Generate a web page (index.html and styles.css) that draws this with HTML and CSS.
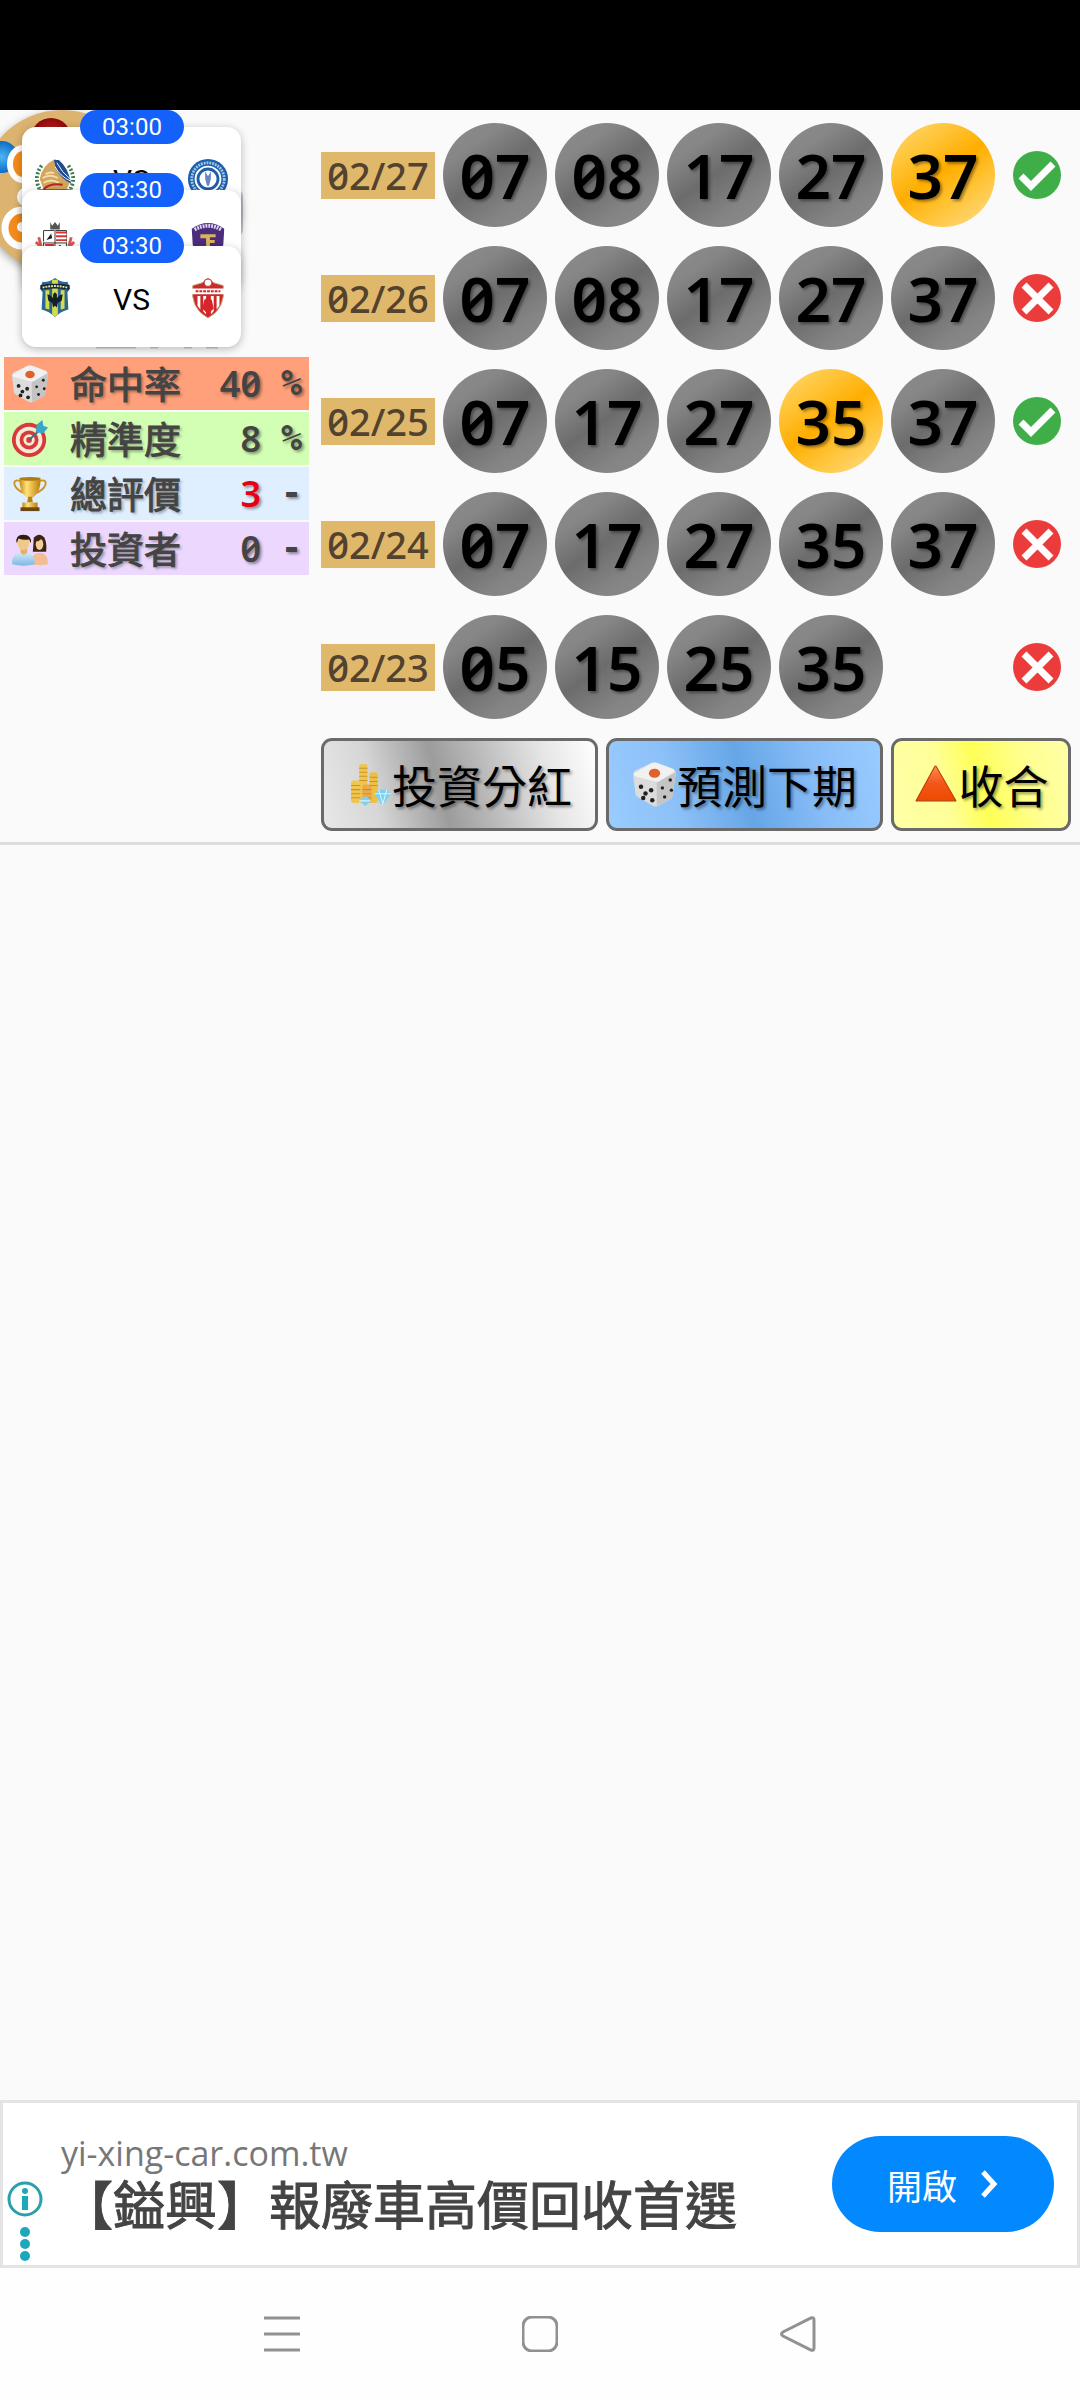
FILE: index.html
```html
<!DOCTYPE html>
<html lang="zh-Hant">

<head>
    <meta charset="UTF-8">
    <meta name="viewport" content="width=device-width, initial-scale=1.0">
    <title>預測下期</title>
    <link rel="stylesheet" href="styles.css">
</head>

<body>
    <!-- shared icons -->
    <svg class="sprite" aria-hidden="true">
        <defs>
            <linearGradient id="gold" x1="0" x2="1">
                <stop offset="0" stop-color="#c98a12" />
                <stop offset="0.35" stop-color="#ffe27a" />
                <stop offset="1" stop-color="#c07c08" />
            </linearGradient>
            <linearGradient id="orange" x1="0" y1="0" x2="0" y2="1">
                <stop offset="0" stop-color="#ff8a50" />
                <stop offset="0.5" stop-color="#f4561a" />
                <stop offset="1" stop-color="#ee4a00" />
            </linearGradient>
            <linearGradient id="shirt" x1="0" y1="0" x2="0" y2="1">
                <stop offset="0" stop-color="#d5ecfb" />
                <stop offset="1" stop-color="#7fb8e2" />
            </linearGradient>
            <radialGradient id="red-ball">
                <stop offset="0" stop-color="#e03030" />
                <stop offset="1" stop-color="#8c0808" />
            </radialGradient>
            <radialGradient id="blue-ball">
                <stop offset="0" stop-color="#4fb4f5" />
                <stop offset="1" stop-color="#0b6cc4" />
            </radialGradient>
        </defs>
        <symbol id="ok" viewBox="0 0 48 48">
            <circle cx="24" cy="24" r="24" fill="#3fae49" />
            <path d="M8 25l10 10 22-22" fill="none" stroke="#fff" stroke-width="7" />
        </symbol>
        <symbol id="no" viewBox="0 0 48 48">
            <circle cx="24" cy="24" r="24" fill="#ec3b3b" />
            <path d="M11 11l27 27M38 11L11 38" fill="none" stroke="#fff" stroke-width="7" />
        </symbol>
        <symbol id="dice" viewBox="0 0 40 40">
            <path d="M1 11q0-3 3-4L17 1q3-1 6 0l13 5q3 1 3 4l-3 20q0 2-2 3l-11 6q-2 1-4 0L5 31q-2-1-2-3z" fill="#dcdcdc" />
            <path d="M22 18L39 9l-3 21q0 2-2 3l-12 6z" fill="#c4c4c4" />
            <path d="M2 10L17 1q3-1 6 0l13 5q3 1 1 3l-13 8q-2 1-4 0L4 13q-3-1-2-3z" fill="#f1f1f1" />
            <ellipse cx="20" cy="10" rx="5" ry="4" fill="#e2602c" />
            <g fill="#222">
                <circle cx="8" cy="22" r="2" />
                <circle cx="17" cy="25" r="2" />
                <circle cx="12" cy="28" r="2" />
                <circle cx="10" cy="32" r="2" />
                <circle cx="18" cy="34" r="2" />
                <circle cx="34" cy="16" r="1.500" />
                <circle cx="27" cy="23" r="1.500" />
                <circle cx="35" cy="25" r="1.500" />
                <circle cx="29" cy="31" r="1.500" />
            </g>
        </symbol>
        <symbol id="target" viewBox="0 0 40 40">
            <circle cx="19" cy="21" r="18" fill="#d83a3a" />
            <circle cx="19" cy="21" r="14" fill="#f6ebd6" />
            <circle cx="19" cy="21" r="10" fill="#d83a3a" />
            <circle cx="19" cy="21" r="6" fill="#f6ebd6" />
            <circle cx="19" cy="21" r="3" fill="#d83a3a" />
            <path d="M19 21L32 9" stroke="#35708c" stroke-width="2" />
            <path d="M26 13l1-8 6-5 1 6 5 2-5 6z" fill="#38a6c8" />
        </symbol>
        <symbol id="cup" viewBox="0 0 40 40">
            <path d="M11 7C3 3 1 9 7 15q3 3 8 4M29 7c8-4 10 2 4 8q-3 3-8 4" fill="none" stroke="#c99522" stroke-width="2" />
            <path d="M9 3h22q1 15-8 21h-6Q8 18 9 3z" fill="url(#gold)" />
            <ellipse cx="20" cy="4" rx="11" ry="2" fill="#b07a10" />
            <path d="M18 23h4l1 6h-6z" fill="#b9820f" />
            <path d="M12 29h16v6H12z" fill="url(#gold)" />
            <path d="M10 34h20v4H10z" fill="#6b4a12" />
        </symbol>
        <symbol id="people" viewBox="0 0 40 40">
            <path d="M24 8q6-6 11 0 3 6 2 15H23z" fill="#3c2412" />
            <path d="M21 36q0-12 9-12t9 12q-8 2-18 0z" fill="#f2bd94" />
            <ellipse cx="30" cy="15" rx="4" ry="6" fill="#f3cc9c" />
            <path d="M26 12q5 0 7-5l2 7V8l-6-3-4 4z" fill="#3c2412" />
            <path d="M1 36q0-13 12-13t12 13q-12 3-24 0z" fill="url(#shirt)" />
            <path d="M10 19h7v5q-4 4-7 0z" fill="#e2b070" />
            <ellipse cx="13" cy="14" rx="6" ry="7" fill="#f1c888" />
            <path d="M6 14Q4 5 13 5t8 9l-2-4q-6 1-11-1z" fill="#2f1c0e" />
        </symbol>
        <symbol id="coins" viewBox="0 0 44 44">
            <rect x="12" y="2" width="8" height="38" rx="2" fill="#f0c450" />
            <rect x="22" y="10" width="8" height="30" rx="2" fill="#eebf45" />
            <rect x="4" y="18" width="9" height="22" rx="2" fill="#f1c650" />
            <rect x="15" y="22" width="9" height="18" rx="2" fill="#ecaa4c" />
            <path d="M12 6h8M12 10h8M12 14h8M12 18h8M22 15h8M22 19h8M22 23h8M4 23h9M4 27h9M4 31h9M4 35h9M15 27h9M15 31h9M15 35h9" stroke="#c8922a" />
            <path d="M27 31l4-4h8l4 4-7 10h-3zM12 38l3-4h5l3 4-5 5z" fill="#7fd0ee" />
            <path d="M27 31h16M31 27l4 14 4-14M12 38h11" fill="none" stroke="#d9f5ff" />
        </symbol>
        <symbol id="up" viewBox="0 0 44 44">
            <path d="M3 38L21 5q1-2 2 0l19 33z" fill="url(#orange)" stroke="#b83c08" stroke-linejoin="round" />
        </symbol>
    </svg>

    <header class="status-bar"></header>

    <main class="board">
        <section class="side">
            <div class="profile">
                <svg class="profile-art" viewBox="0 0 309 245" aria-hidden="true">
                    <circle cx="62" cy="82" r="82" fill="#dcb470" />
                    <circle cx="51" cy="28" r="20" fill="url(#red-ball)" />
                    <circle cx="2" cy="47" r="16" fill="url(#blue-ball)" />
                    <ellipse cx="23" cy="54" rx="13" ry="16" fill="#f58c1a" stroke="#fff" stroke-width="6" />
                    <circle cx="27" cy="87" r="10" fill="#fff" />
                    <ellipse cx="22" cy="118" rx="17" ry="18" fill="#f58c1a" stroke="#fff" stroke-width="7" />
                    <circle cx="22" cy="117" r="5" fill="#fff" />
                    <rect x="224" y="80" width="19" height="46" rx="6" fill="#c9c7d2" />
                    <path d="M96 237h40M150 237h8M184 237h8M206 237h12" stroke="#ccc" stroke-width="3" />
                </svg>
            </div>
            <table class="stats">
                <tr class="hit">
                    <td class="icon"><svg><use href="#dice" /></svg></td>
                    <th scope="row">命中率</th>
                    <td class="num">40</td>
                    <td class="unit">%</td>
                </tr>
                <tr class="accuracy">
                    <td class="icon"><svg><use href="#target" /></svg></td>
                    <th scope="row">精準度</th>
                    <td class="num">8</td>
                    <td class="unit">%</td>
                </tr>
                <tr class="rating">
                    <td class="icon"><svg><use href="#cup" /></svg></td>
                    <th scope="row">總評價</th>
                    <td class="num">3</td>
                    <td class="unit">-</td>
                </tr>
                <tr class="investor">
                    <td class="icon"><svg><use href="#people" /></svg></td>
                    <th scope="row">投資者</th>
                    <td class="num">0</td>
                    <td class="unit">-</td>
                </tr>
            </table>
        </section>

        <section class="history">
            <div class="draw">
                <time>02/27</time>
                <span class="ball">07</span>
                <span class="ball">08</span>
                <span class="ball">17</span>
                <span class="ball">27</span>
                <span class="ball win">37</span>
                <svg class="mark"><use href="#ok" /></svg>
            </div>
            <div class="draw">
                <time>02/26</time>
                <span class="ball">07</span>
                <span class="ball">08</span>
                <span class="ball">17</span>
                <span class="ball">27</span>
                <span class="ball">37</span>
                <svg class="mark"><use href="#no" /></svg>
            </div>
            <div class="draw">
                <time>02/25</time>
                <span class="ball">07</span>
                <span class="ball">17</span>
                <span class="ball">27</span>
                <span class="ball win">35</span>
                <span class="ball">37</span>
                <svg class="mark"><use href="#ok" /></svg>
            </div>
            <div class="draw">
                <time>02/24</time>
                <span class="ball">07</span>
                <span class="ball">17</span>
                <span class="ball">27</span>
                <span class="ball">35</span>
                <span class="ball">37</span>
                <svg class="mark"><use href="#no" /></svg>
            </div>
            <div class="draw">
                <time>02/23</time>
                <span class="ball">05</span>
                <span class="ball">15</span>
                <span class="ball">25</span>
                <span class="ball">35</span>
                <svg class="mark"><use href="#no" /></svg>
            </div>
            <div class="actions">
                <button class="silver"><svg><use href="#coins" /></svg>投資分紅</button>
                <button class="blue"><svg><use href="#dice" /></svg>預測下期</button>
                <button class="yellow"><svg><use href="#up" /></svg>收合</button>
            </div>
        </section>

        <!-- floating match widget -->
        <aside class="matches">
            <div class="match">
                <time>03:00</time>
                <svg class="crest" viewBox="0 0 44 44">
                    <path d="M8 8Q-2 22 8 36M36 8q10 14 0 28" fill="none" stroke="#3d7a4d" stroke-width="4" stroke-dasharray="2 2" />
                    <path d="M6 22Q8 8 22 1q14 10 15 26l-6 13H13z" fill="#d4a55c" />
                    <path d="M21 2l5 0q10 8 13 25-10-5-16-15z" fill="#1f4d8c" />
                    <path d="M24 5q5 10 14 17M22 9q5 10 16 15" stroke="#fff" fill="none" />
                    <path d="M9 21q8-5 16 0M10 26q8-5 16 0M12 17q5-3 9-1" stroke="#f3dcb0" fill="none" stroke-width="2" />
                    <path d="M10 33q6-7 20-5" stroke="#b3261e" fill="none" stroke-width="2" />
                    <path d="M5 33h34v5H5z" fill="#222" />
                </svg>
                <b>VS</b>
                <svg class="crest" viewBox="0 0 44 44">
                    <circle cx="22" cy="22" r="21" fill="#1d5ea8" />
                    <circle cx="22" cy="22" r="17" fill="none" stroke="#9fc4ea" stroke-width="3" stroke-dasharray="2 1" />
                    <circle cx="22" cy="22" r="13" fill="#1d5ea8" stroke="#fff" stroke-width="2" />
                    <circle cx="22" cy="22" r="9" fill="#fff" />
                    <path d="M19 14l3 5 3-5v8l-2 7h-2l-2-7z" fill="#6a86c8" />
                </svg>
            </div>
            <div class="match">
                <time>03:30</time>
                <svg class="crest" viewBox="0 0 44 44">
                    <path d="M17 1l2 4 3-4 3 4 2-4v8H17z" fill="#555" />
                    <path d="M5 17q2 10 6 18M2 22l8 8M39 17q-2 10-6 18M42 22l-8 8" stroke="#d55" fill="none" stroke-width="3" />
                    <path d="M10 10h24v18q-4 10-12 12-8-2-12-12z" fill="#fff" stroke="#333" />
                    <path d="M23 11h11v11H23z" fill="#d33" />
                    <path d="M23 14h11M23 18h11M22 10v28M10 22h24" stroke="#fff" stroke-width="2" />
                    <path d="M22 10v28M10 23h24" stroke="#333" />
                    <path d="M13 20l5-7 1 5zM24 28l3-3 5 4z" fill="#222" />
                    <path d="M11 24h10v10q-7-1-10-10z" fill="#d33" />
                </svg>
                <b>VS</b>
                <svg class="crest" viewBox="0 0 44 44">
                    <path d="M5 8q17-12 34 0l-1 17q-3 11-16 18Q9 36 6 25z" fill="#4b2c7d" />
                    <path d="M8 9q14-8 28 0" fill="none" stroke="#ddd4ee" stroke-width="4" stroke-dasharray="2 1" />
                    <path d="M14 14h16v3h-6v3h5v3h-5v4h5v3H20V18h-6z" fill="#d9b45a" />
                </svg>
            </div>
            <div class="match">
                <time>03:30</time>
                <svg class="crest" viewBox="0 0 44 44">
                    <path d="M9 5q6 1 13-4 7 5 13 4l3 7-3 4 1 18q-8 2-14 8-6-6-14-8l1-18-3-4z" fill="#2a6793" />
                    <path d="M12 14h4v20l-4-1zM28 14h4v19l-4 1zM19 3h6v36l-3 3-3-3z" fill="#d2dc4c" />
                    <path d="M7 11q15-3 30 0" stroke="#16252f" stroke-width="5" fill="none" />
                    <path d="M9 11q13-3 26 0" stroke="#e5e9b0" stroke-width="2" stroke-dasharray="2 1" fill="none" />
                    <path d="M14 18l3 1 3 3v-4l2-2 2 2v4l3-3 3-1-1 7-4 2-1 5-2-2-2 2-1-5-4-2z" fill="#15202a" />
                </svg>
                <b>VS</b>
                <svg class="crest" viewBox="0 0 44 44">
                    <path d="M6 9l10-3 6-5 6 5 10 3q3 24-16 34Q3 33 6 9z" fill="#c92b2b" stroke="#cfae74" />
                    <path d="M11 20h3v14l-3-4zM17 20h3v19l-3-3zM25 20h3v16l-3 3zM31 20h3v10l-3 4z" fill="#fff" />
                    <path d="M18 24q4-4 8 0l2 9-6 6-6-6z" fill="#d9242b" />
                    <path d="M5 12h34v6H5z" fill="#fff" />
                    <path d="M9 15h26" stroke="#c92b2b" stroke-width="2" stroke-dasharray="3 1" />
                    <circle cx="22" cy="6" r="4" fill="#fff" stroke="#c92b2b" />
                </svg>
            </div>
        </aside>
    </main>

    <footer class="ad">
        <div class="ad-info">
            <svg viewBox="0 0 36 84" fill="#1ba8ba">
                <circle cx="18" cy="18" r="16" fill="none" stroke="#2b9fab" stroke-width="3" />
                <circle cx="18" cy="10" r="3" />
                <path d="M15 15h6v14h-6z" />
                <circle cx="18" cy="51" r="5" />
                <circle cx="18" cy="63" r="5" />
                <circle cx="18" cy="75" r="5" />
            </svg>
        </div>
        <div class="ad-text">
            <p class="domain">yi-xing-car.com.tw</p>
            <p class="headline">【鎰興】報廢車高價回收首選</p>
        </div>
        <a class="open" href="#">開啟
            <svg viewBox="0 0 20 30"><path d="M4 3l11 12L4 27" fill="none" stroke="#fff" stroke-width="5" /></svg>
        </a>
    </footer>

    <nav class="nav-bar">
        <button aria-label="選單"><svg viewBox="0 0 36 36"><path d="M0 2h36M0 18h36M0 34h36" /></svg></button>
        <button aria-label="主畫面"><svg viewBox="0 0 36 36"><rect x="1" y="1" width="34" height="34" rx="9" /></svg></button>
        <button aria-label="返回"><svg viewBox="0 0 36 36"><path d="M31 2q3-1 3 2v28q0 3-3 2L3 20q-3-2 0-4z" /></svg></button>
    </nav>
</body>

</html>
```
FILE: styles.css
```css
* {
    margin: 0;
    padding: 0;
    box-sizing: border-box;
}

body {
    min-height: 100vh;
    display: flex;
    flex-direction: column;
    background: #fafafa;
    color: #444;
    font-family: "Noto Sans CJK TC", sans-serif;
}

button {
    font-family: inherit;
    cursor: pointer;
}

.sprite {
    position: absolute;
    width: 0;
    height: 0;
}

.status-bar {
    height: 110px;
    background: black;
}

.board {
    position: relative;
    display: flex;
    gap: 12px;
    padding: 0 9px 11px 4px;
    border-bottom: 3px solid #ddd;
}

/* left column */
.side {
    flex: 1;
}

.profile {
    height: 245px;
    margin-left: -4px;
    overflow: hidden;
}

.profile-art {
    display: block;
    width: 309px;
    height: 245px;
}

.profile-art circle:first-child {
    filter: drop-shadow(0 3px 4px #0005);
}

.stats {
    width: 100%;
    border-spacing: 0 2px;
    text-shadow: 2px 2px 3px #0006;
}

.stats tr {
    height: 53px;
}

.stats th {
    padding-left: 10px;
    font-size: 37px;
    font-weight: normal;
    line-height: 53px;
    text-align: left;
    -webkit-text-stroke: 1px #444;
}

.stats .icon {
    width: 56px;
    padding-left: 7px;
}

.stats svg {
    display: block;
    width: 38px;
    height: 38px;
}

.stats .num {
    font: 600 36px/53px "Noto Sans", sans-serif;
    font-variant-numeric: slashed-zero;
    text-align: right;
}

.stats .unit {
    width: 48px;
    padding-right: 7px;
    font: bold 35px/53px "DejaVu Sans Mono", monospace;
    text-align: right;
}

.hit {
    background: #ffa07a;
}

.accuracy {
    background: #d2ffb4;
}

.rating {
    background: #e0efff;
}

.investor {
    background: #ecd8ff;
}

.rating .num {
    color: #e60012;
}

/* right column */
.history {
    display: flex;
    flex-direction: column;
    gap: 19px;
    padding-top: 13px;
}

.draw {
    display: grid;
    grid-template-columns: 114px repeat(5, 104px) 68px;
    gap: 8px;
    align-items: center;
}

.draw time {
    background: #e0b86c;
    color: #53422e;
    font: 500 38px/47px "Noto Sans", sans-serif;
    font-variant-numeric: slashed-zero;
    text-align: center;
}

.ball {
    height: 104px;
    border-radius: 50%;
    background: linear-gradient(145deg, #8c8c8c, #868686 25%, #6c6c6c 48%, #848484 75%, #8c8c8c);
    color: black;
    font: 600 62px/104px "Noto Sans", sans-serif;
    font-variant-numeric: slashed-zero;
    text-align: center;
    text-shadow: 2px 2px 3px #0006;
}

.ball.win {
    background: linear-gradient(145deg, #ffd978, #ffc53a 25%, #ffae00 48%, #ffc53a 70%, #ffdf90);
}

.mark {
    grid-column: 7;
    justify-self: center;
    width: 48px;
    height: 48px;
}

.actions {
    display: grid;
    grid-template-columns: 277fr 277fr 180fr;
    gap: 8px;
}

.actions button {
    display: flex;
    align-items: center;
    justify-content: center;
    height: 93px;
    border: 3px solid #6a6a6a;
    border-radius: 11px;
    color: black;
    font-size: 45px;
    text-shadow: 2px 2px 3px #0006;
}

.actions svg {
    width: 45px;
    height: 45px;
}

.actions .silver {
    background: linear-gradient(75deg, #e8e8e8, #d6d6d6 20%, #9c9c9c 43%, #b8b8b8 58%, #e4e4e4 80%, #fff);
}

.actions .blue {
    background: linear-gradient(75deg, #99ccff, #8cc0f8 25%, #66a6e6 50%, #88bdf8 75%, #99ccff);
}

.actions .yellow {
    background: linear-gradient(75deg, #ffffa8, #ffff99 30%, #ffff58 50%, #ffff90 75%, #ffffa8);
}

/* matches lie over the left column */
.matches {
    position: absolute;
    top: 17px;
    left: 22px;
}

.match {
    position: relative;
    display: flex;
    align-items: center;
    justify-content: space-between;
    width: 219px;
    height: 101px;
    padding: 2px 12px 0;
    border-radius: 14px;
    background: white;
    box-shadow: 0 2px 8px #0004;
}

.match + .match {
    margin-top: -38px;
}

.match:last-child {
    margin-top: -45px;
}

.match time {
    position: absolute;
    top: -17px;
    left: 58px;
    width: 104px;
    border-radius: 17px;
    background: #1460fa;
    color: white;
    font: 24px/34px Roboto, sans-serif;
    text-align: center;
}

.match b {
    padding-top: 4px;
    color: black;
    font: 30px/44px Roboto, sans-serif;
}

.crest {
    width: 42px;
    height: 42px;
}

/* banner */
.ad {
    display: flex;
    align-items: center;
    height: 168px;
    margin-top: auto;
    padding-right: 23px;
    border: 3px solid #e4e4e4;
    background: white;
}

.ad-info {
    align-self: flex-end;
    width: 58px;
    padding-left: 4px;
}

.ad-info svg {
    display: block;
    width: 36px;
    height: 84px;
}

.ad-text {
    flex: 1;
    padding-bottom: 6px;
}

.domain {
    color: #777;
    font: 34px/44px "Open Sans", sans-serif;
}

.headline {
    font-size: 52px;
    line-height: 56px;
    white-space: nowrap;
    -webkit-text-stroke: 1px #444;
}

.open {
    display: flex;
    align-items: center;
    justify-content: center;
    gap: 22px;
    width: 222px;
    height: 96px;
    border-radius: 48px;
    background: #0288ff;
    color: white;
    font-size: 35px;
    text-decoration: none;
}

.open svg {
    width: 20px;
    height: 30px;
}

/* system keys */
.nav-bar {
    display: flex;
    align-items: center;
    justify-content: center;
    gap: 222px;
    height: 132px;
    background: #fefefe;
}

.nav-bar button {
    width: 36px;
    height: 36px;
    border: none;
    background: none;
}

.nav-bar svg {
    display: block;
    fill: none;
    stroke: #919191;
    stroke-width: 3px;
}
```
